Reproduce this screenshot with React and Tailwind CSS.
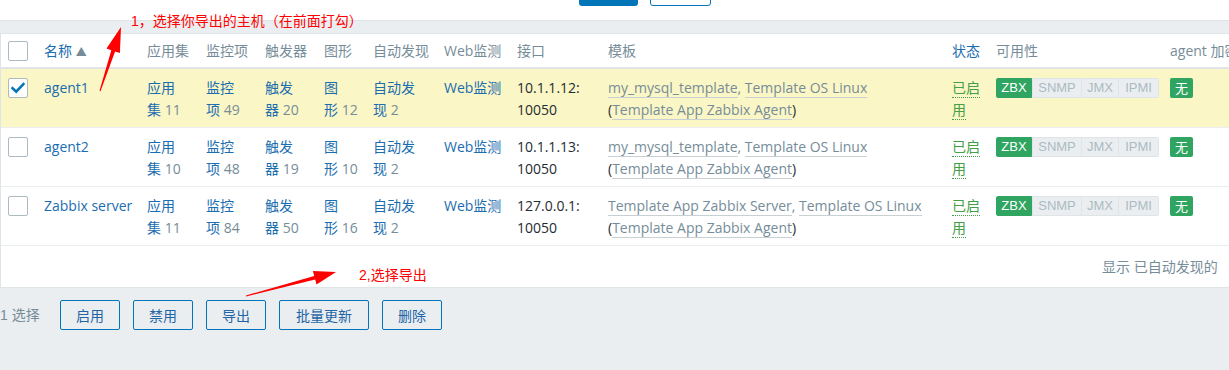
import React from "react";

const rows = [
  { name: "agent1", apps: 11, items: 49, trig: 20, graphs: 12, disc: 2, ip: "10.1.1.12:", t1: "my_mysql_template", t2: "Template OS Linux", sel: true },
  { name: "agent2", apps: 10, items: 48, trig: 19, graphs: 10, disc: 2, ip: "10.1.1.13:", t1: "my_mysql_template", t2: "Template OS Linux", sel: false },
  { name: "Zabbix server", apps: 11, items: 84, trig: 50, graphs: 16, disc: 2, ip: "127.0.0.1:", t1: "Template App Zabbix Server", t2: "Template OS Linux", sel: false },
];

function Checkbox({ checked, className = "" }) {
  return (
    <div className={"w-[20px] h-[20px] border border-[#acbbc2] rounded-[2px] bg-white flex items-center justify-center " + className}>
      {checked && (
        <svg width="14" height="12" viewBox="0 0 14 12">
          <path d="M1.5 6.2 L5.2 9.6 L12.5 2" fill="none" stroke="#0275b8" strokeWidth="2.6" strokeLinecap="square" />
        </svg>
      )}
    </div>
  );
}

function LinkCell({ a, b, n, w }) {
  return (
    <div className={w}>
      <div className="text-[#1a6db0]">{a}</div>
      <div>
        <span className="text-[#1a6db0]">{b}</span>
        <span className="text-[#768d99]"> {n}</span>
      </div>
    </div>
  );
}

function Tpl({ children }) {
  return <span className="text-[#768d99] border-b border-[#c8d0d4]">{children}</span>;
}

function Row({ r }) {
  return (
    <div className={"flex border-b border-[#ebeef0] pt-[8px] pb-[6px] leading-[22px] text-[14px] " + (r.sel ? "bg-[#fbf6c5]" : "bg-white")}>
      <div className="w-[43px] shrink-0 pl-[7px]">
        <Checkbox checked={r.sel} className="mt-[1px]" />
      </div>
      <div className="w-[103px] shrink-0 text-[#1a6db0] whitespace-nowrap">{r.name}</div>
      <LinkCell a="应用" b="集" n={r.apps} w="w-[59px] shrink-0" />
      <LinkCell a="监控" b="项" n={r.items} w="w-[59px] shrink-0" />
      <LinkCell a="触发" b="器" n={r.trig} w="w-[59px] shrink-0" />
      <LinkCell a="图" b="形" n={r.graphs} w="w-[49px] shrink-0" />
      <LinkCell a="自动发" b="现" n={r.disc} w="w-[71px] shrink-0" />
      <div className="w-[73px] shrink-0 text-[#1a6db0] whitespace-nowrap">Web监测</div>
      <div className="w-[91px] shrink-0 text-[#1f2c33]">
        <div>{r.ip}</div>
        <div>10050</div>
      </div>
      <div className="w-[344px] shrink-0 whitespace-nowrap text-[#1f2c33]">
        <div>
          <Tpl>{r.t1}</Tpl>
          <span className="text-[#768d99]">, </span>
          <Tpl>{r.t2}</Tpl>
        </div>
        <div>
          (<Tpl>Template App Zabbix Agent</Tpl>)
        </div>
      </div>
      <div className="w-[44px] shrink-0 text-[#429e47]">
        <div><span className="border-b border-dotted border-[#429e47]">已启</span></div>
        <div><span className="border-b border-dotted border-[#429e47]">用</span></div>
      </div>
      <div className="w-[174px] shrink-0">
        <div className="flex mt-[1px] h-[20px] text-[13px] leading-[18px] font-['Liberation_Sans',sans-serif]">
          <span className="w-[36px] text-center bg-[#2fa561] border border-[#2fa561] text-white rounded-l-[2px]">ZBX</span>
          <span className="w-[50px] text-center bg-[#ebeef0] border border-[#dfe4e7] text-[#acbbc2]">SNMP</span>
          <span className="w-[37px] text-center bg-[#ebeef0] border border-[#dfe4e7] border-l-0 text-[#acbbc2]">JMX</span>
          <span className="w-[40px] text-center bg-[#ebeef0] border border-[#dfe4e7] border-l-0 text-[#acbbc2] rounded-r-[2px]">IPMI</span>
        </div>
      </div>
      <div className="flex-1">
        <span className="mt-[1px] flex items-center justify-center w-[23px] h-[20px] bg-[#2fa561] text-white text-[13px] rounded-[2px]">无</span>
      </div>
    </div>
  );
}

export default function App() {
  return (
    <div className="relative w-[1229px] h-[370px] overflow-hidden bg-[#ebeef0] font-['Open_Sans','Noto_Sans_CJK_SC',sans-serif] text-[14px]">
      <div className="h-[21px] bg-white border-b border-[#dfe4e7] flex pl-[579px] gap-[12px] overflow-hidden">
        <div className="w-[59px] h-[30px] mt-[-24px] shrink-0 bg-[#0275b8] rounded-[3px]" />
        <div className="w-[61px] h-[30px] mt-[-24px] shrink-0 bg-white border border-[#0275b8] rounded-[3px]" />
      </div>
      <div className="h-[12px]" />
      <div className="bg-white border border-[#dfe4e7] border-r-0 w-[1260px]">
        <div className="flex items-center h-[35px] border-b-2 border-[#dfe4e7] text-[#768d99] whitespace-nowrap">
          <div className="w-[43px] shrink-0 pl-[7px]"><Checkbox /></div>
          <div className="w-[103px] shrink-0 text-[#1a6db0]">名称 <span className="text-[#768d99] text-[11px]">▲</span></div>
          <div className="w-[59px] shrink-0">应用集</div>
          <div className="w-[59px] shrink-0">监控项</div>
          <div className="w-[59px] shrink-0">触发器</div>
          <div className="w-[49px] shrink-0">图形</div>
          <div className="w-[71px] shrink-0">自动发现</div>
          <div className="w-[73px] shrink-0">Web监测</div>
          <div className="w-[91px] shrink-0">接口</div>
          <div className="w-[344px] shrink-0">模板</div>
          <div className="w-[44px] shrink-0 text-[#1a6db0]">状态</div>
          <div className="w-[174px] shrink-0">可用性</div>
          <div className="flex-1">agent 加密</div>
        </div>
        {rows.map((r) => (
          <Row key={r.name} r={r} />
        ))}
        <div className="h-[41px] flex items-center pl-[1101px] text-[#768d99] whitespace-nowrap">
          显示 已自动发现的
        </div>
      </div>
      <div className="flex items-center mt-[12px] h-[30px] whitespace-nowrap">
        <span className="w-[60px] shrink-0 text-[#768d99] font-['Liberation_Sans','Noto_Sans_CJK_SC',sans-serif]">1 选择</span>
        <div className="flex gap-[13px] text-[#1f65a6]">
          <button className="w-[60px] h-[30px] border border-[#0275b8] rounded-[2px] bg-transparent">启用</button>
          <button className="w-[60px] h-[30px] border border-[#0275b8] rounded-[2px] bg-transparent">禁用</button>
          <button className="w-[60px] h-[30px] border border-[#0275b8] rounded-[2px] bg-transparent">导出</button>
          <button className="w-[90px] h-[30px] border border-[#0275b8] rounded-[2px] bg-transparent">批量更新</button>
          <button className="w-[60px] h-[30px] border border-[#0275b8] rounded-[2px] bg-transparent">删除</button>
        </div>
      </div>

      <div className="absolute left-[131px] top-[11px] text-[14px] leading-[20px] text-[#ff0000] whitespace-nowrap font-['Liberation_Sans','Noto_Sans_CJK_SC',sans-serif]">1，选择你导出的主机（在前面打勾）</div>
      <div className="absolute left-[359px] top-[265px] text-[14px] leading-[20px] text-[#ff0000] whitespace-nowrap font-['Liberation_Sans','Noto_Sans_CJK_SC',sans-serif]">2,选择导出</div>
      <svg className="absolute left-0 top-0 pointer-events-none" width="1229" height="370">
        <polygon fill="#ff0000" points="99.5,90.8 111.3,50.2 106.5,48.6 121,27 119.9,53 115.1,51.4 100.5,91.2" />
        <polygon fill="#ff0000" points="245.9,295.5 314.2,276 312.9,270.9 336,272 316.5,284.5 315.2,279.4 246.1,296.5" />
      </svg>
    </div>
  );
}
